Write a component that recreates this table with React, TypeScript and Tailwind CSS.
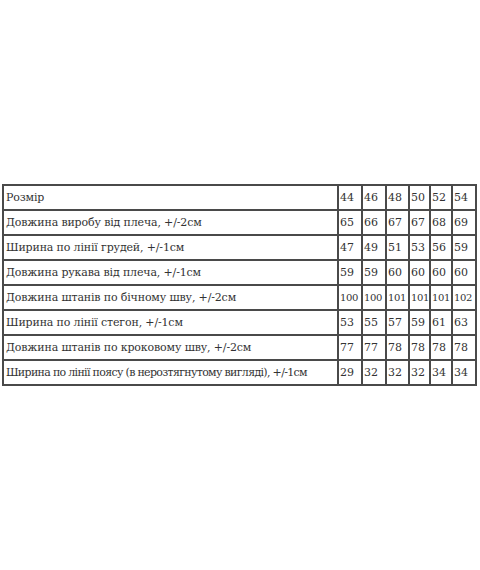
import React from "react";

const rows: [string, string[]][] = [
  ["Розмір", ["44", "46", "48", "50", "52", "54"]],
  ["Довжина виробу від плеча, +/-2см", ["65", "66", "67", "67", "68", "69"]],
  ["Ширина по лінії грудей, +/-1см", ["47", "49", "51", "53", "56", "59"]],
  ["Довжина рукава від плеча, +/-1см", ["59", "59", "60", "60", "60", "60"]],
  ["Довжина штанів по бічному шву, +/-2см", ["100", "100", "101", "101", "101", "102"]],
  ["Ширина по лінії стегон, +/-1см", ["53", "55", "57", "59", "61", "63"]],
  ["Довжина штанів по кроковому шву, +/-2см", ["77", "77", "78", "78", "78", "78"]],
  ["Ширина по лінії поясу (в нерозтягнутому вигляді), +/-1см", ["29", "32", "32", "32", "34", "34"]],
];

const widths = ["w-[335px]", "w-[24px]", "w-[24px]", "w-[23px]", "w-[21px]", "w-[22px]", "w-[24px]"];

export default function App() {
  return (
    <div className="w-[480px] h-[570px] bg-white pt-[184px] pl-[2px]">
      <table className="table-fixed border-separate border-spacing-0 border border-[#4a4a4a] w-[475px] text-[#333] text-[11px] leading-none font-['DejaVu_Serif',serif]">
        <colgroup>
          {widths.map((w, i) => (
            <col key={i} className={w} />
          ))}
        </colgroup>
        <tbody>
          {rows.map(([label, vals], r) => (
            <tr key={r} className="h-[25px]">
              <td
                className={`border border-[#4a4a4a] pl-[2px] whitespace-nowrap overflow-hidden ${r === 7 ? "tracking-[-0.68px]" : "tracking-[-0.15px]"}`}
              >
                {label}
              </td>
              {vals.map((v, i) => (
                <td
                  key={i}
                  className={`border border-[#4a4a4a] pl-[1px] whitespace-nowrap overflow-hidden ${v.length > 2 ? "text-[10px] tracking-[-0.4px]" : ""}`}
                >
                  {v}
                </td>
              ))}
            </tr>
          ))}
        </tbody>
      </table>
    </div>
  );
}
